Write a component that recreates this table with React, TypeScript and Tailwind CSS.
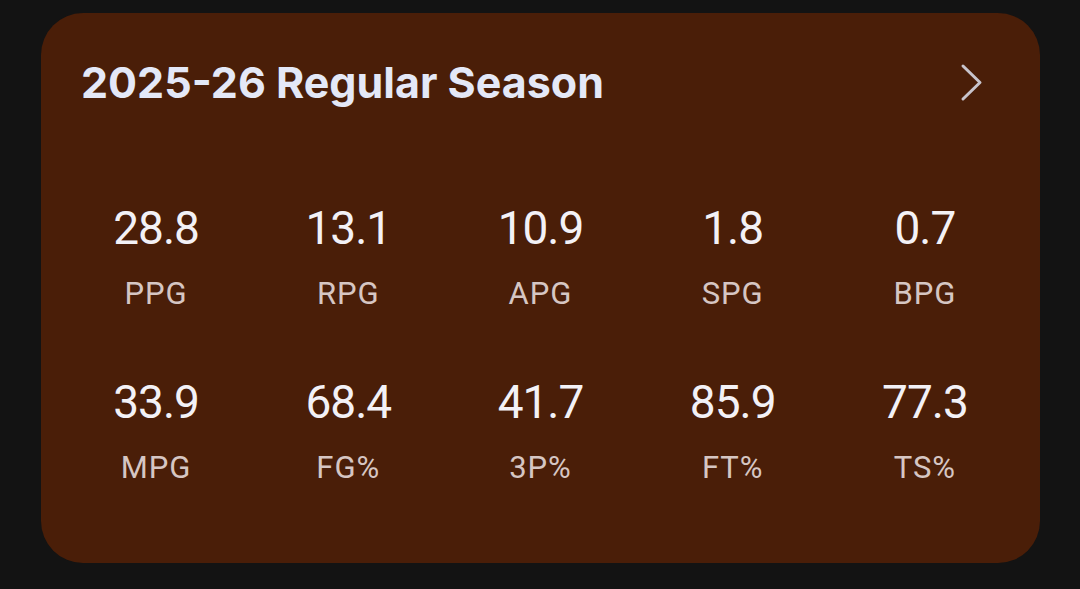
import React from "react";

const rows = [
  [
    ["28.8", "PPG"],
    ["13.1", "RPG"],
    ["10.9", "APG"],
    ["1.8", "SPG"],
    ["0.7", "BPG"],
  ],
  [
    ["33.9", "MPG"],
    ["68.4", "FG%"],
    ["41.7", "3P%"],
    ["85.9", "FT%"],
    ["77.3", "TS%"],
  ],
];

export default function App() {
  return (
    <div className="w-[1080px] h-[589px] bg-[#131313] pt-[13px] pl-[41px]">
      <div className="w-[999px] h-[550px] rounded-[42px] bg-[#4a1e08] flex flex-col pt-[47px]">
        <div className="flex items-center justify-between pl-[40px] pr-[55px] h-[44px]">
          <div
            className="text-[43px] leading-none font-bold text-[#e4e8f7]"
            style={{ fontFamily: "Inter, 'Noto Sans', sans-serif" }}
          >
            2025-26 Regular Season
          </div>
          <svg width="28" height="41" viewBox="0 0 28 41" fill="none">
            <path d="M6 4 L23 20.5 L6 37" stroke="#c8c4cc" strokeWidth="3" strokeLinecap="round" strokeLinejoin="round" />
          </svg>
        </div>
        <div className="grid grid-cols-5 px-[19px] mt-[101px] gap-y-[70px]" style={{ fontFamily: "Roboto, sans-serif" }}>
          {rows.flat().map(([v, l]) => (
            <div key={l} className="flex flex-col items-center">
              <div className="text-[46px] leading-[46px] text-[#f3f1f6] tracking-[-1px]">{v}</div>
              <div className="text-[31px] leading-[31px] text-[#d6c6c3] mt-[27px] tracking-[1px]">{l}</div>
            </div>
          ))}
        </div>
      </div>
    </div>
  );
}
